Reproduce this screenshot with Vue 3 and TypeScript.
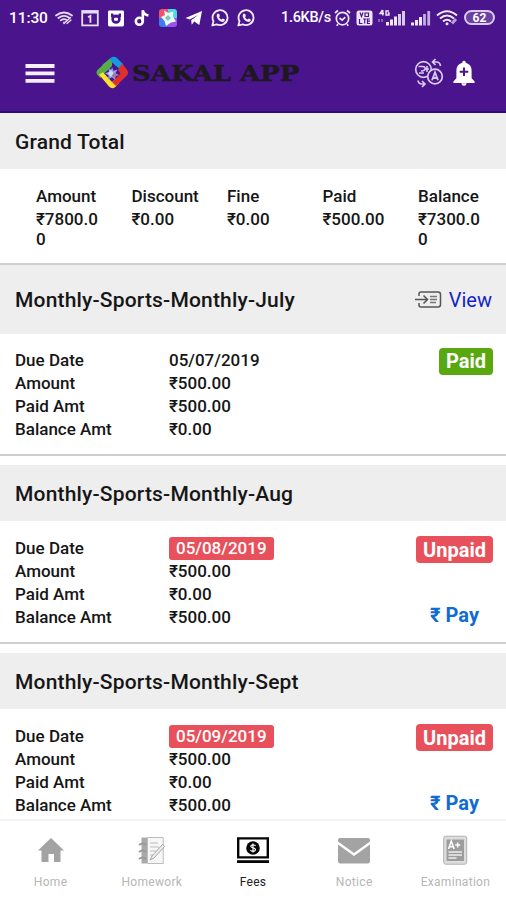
<script setup lang="ts">
interface Total {
  label: string
  value: string
}

interface FeeEntry {
  title: string
  dueDate: string
  amount: string
  paid: string
  balance: string
  settled: boolean
}

const totals: Total[] = [
  { label: 'Amount', value: '₹7800.00' },
  { label: 'Discount', value: '₹0.00' },
  { label: 'Fine', value: '₹0.00' },
  { label: 'Paid', value: '₹500.00' },
  { label: 'Balance', value: '₹7300.00' },
]

const fees: FeeEntry[] = [
  { title: 'Monthly-Sports-Monthly-July', dueDate: '05/07/2019', amount: '₹500.00', paid: '₹500.00', balance: '₹0.00', settled: true },
  { title: 'Monthly-Sports-Monthly-Aug', dueDate: '05/08/2019', amount: '₹500.00', paid: '₹0.00', balance: '₹500.00', settled: false },
  { title: 'Monthly-Sports-Monthly-Sept', dueDate: '05/09/2019', amount: '₹500.00', paid: '₹0.00', balance: '₹500.00', settled: false },
]
</script>

<template>
  <div class="screen">
    <header class="top">
      <div class="status">
        <span class="clock">11:30</span>
        <div class="status-left">
          <svg width="18" height="18" viewBox="0 0 18 18" fill="none" stroke="#e6dcf5" stroke-width="1.8" stroke-linecap="round">
            <path d="M1 6.5Q9 0.5 17 6.5M3.4 9Q9 4.8 14.6 9M5.8 11.4Q9 9 12 11.4" />
            <path d="M12 14.5l4-3.5M9 14.5l6.5-6" stroke-width="1.3" />
            <circle cx="9" cy="13.5" r="1" fill="#e6dcf5" stroke="none" />
          </svg>
          <svg width="18" height="18" viewBox="0 0 18 18">
            <rect x="1.2" y="2" width="15.6" height="14.4" fill="none" stroke="#e6dcf5" stroke-width="1.8" />
            <path d="M1 3.2h16" stroke="#e6dcf5" stroke-width="2.6" />
            <path d="M7 8.2l2.4-1.4v7" fill="none" stroke="#e6dcf5" stroke-width="1.8" />
          </svg>
          <svg width="18" height="18" viewBox="0 0 18 18">
            <rect x="1" y="1.4" width="16" height="16" rx="1.4" fill="#fff" />
            <path d="M4 4.4h2l1 2h4l1-2h2v4H4z" fill="#4a148c" />
            <circle cx="9" cy="10.2" r="4.6" fill="#4a148c" />
            <rect x="7" y="8.700" width="4" height="3" rx="1" fill="#fff" />
          </svg>
          <svg width="18" height="18" viewBox="0 0 18 18" fill="none" stroke="#fff" stroke-width="2.6">
            <circle cx="6.3" cy="12.3" r="3.5" />
            <path d="M9.8 12.3V1.2q.8 4.6 5.6 5.2" />
          </svg>
          <svg width="18" height="18" viewBox="0 0 18 18">
            <path d="M3 0h6v9H0V3Q0 0 3 0z" fill="#ef5367" />
            <path d="M9 0h6q3 0 3 3v6H9z" fill="#49dbe0" />
            <path d="M0 9h9v9H3q-3 0-3-3z" fill="#3c7df0" />
            <path d="M9 9h9v6q0 3-3 3H9z" fill="#9854e8" />
            <path d="M5 1.500L9.500 4l5-1.500-.5 5 3 5-5 1-5 3.500-1.500-5L2 8l4-2z" fill="#e8fbf5" />
            <path d="M9 6L12 9 9 12 6 9z" fill="#79c9bd" />
          </svg>
          <svg width="18" height="18" viewBox="0 0 18 18" fill="#fff">
            <path d="M0.5 9L17 2l-2.7 14-5-3.5-2.6 3.2-.5-4.4 7.3-5.6-8.8 4.8z" />
          </svg>
          <svg v-for="n in 2" :key="n" class="wa" width="19" height="18" viewBox="0 0 19 18">
            <path d="M1.3 16.5l1.2-4.2A7.5 7.5 0 1 1 5.6 15.3z" fill="none" stroke="#f1ebfa" stroke-width="1.8" stroke-linejoin="round" />
            <path d="M6.6 4.6l1.7.4.6 2.2-.9 1q1 1.8 2.7 2.4l1-1 2.2 1q0 2.2-2.2 2.3Q7.400 12.400 5.700 7.700 5.400 5.600 6.600 4.600z" fill="#f1ebfa" />
          </svg>
        </div>
        <span class="speed">1.6KB/s</span>
        <div class="status-right">
          <svg width="17" height="18" viewBox="0 0 17 18" fill="none" stroke="#efe8fa" stroke-width="1.7">
            <circle cx="8.500" cy="9.600" r="6.200" />
            <path d="M1 4l3-2.500M16 4l-3-2.500M5.500 9l2.600 2.200 3.200-3M4 15.200l-1.300 1.600M13 15.200l1.300 1.600" />
          </svg>
          <svg width="17" height="18" viewBox="0 0 17 18">
            <rect x="0.500" y="1.500" width="16" height="15" rx="2.500" fill="#efe8fa" />
            <path d="M4 3.500l1.500 4 1.500-4M9 4h3.500v3.500H9zM3.500 10v4.500h3M7 10h3.500M8.700 10v4.500M14 10h-2.500v4.500H14M11.500 12.200H14" fill="none" stroke="#4a148c" stroke-width="1.200" />
          </svg>
          <svg width="28" height="18" viewBox="0 0 28 18">
            <path d="M4.500 1L2 4.500h4M4.800 1v5.500M11 2H8v4h3V4H9.700" fill="none" stroke="#efe8fa" stroke-width="1.400" />
            <path d="M1 10v3M4 10v3" stroke="#9a78c6" stroke-width="1.500" />
            <path d="M9.500 13v3.500M13.500 10.500v6M17.500 7.500v9" stroke="#efe8fa" stroke-width="3" />
            <path d="M21.500 5v11.500M25.500 2v14.500" stroke="#d9c9ee" stroke-width="3" />
          </svg>
          <svg width="20" height="18" viewBox="0 0 20 18">
            <path d="M1.500 13.500v3M5.500 11v5.500M9.500 8v8.500" stroke="#efe8fa" stroke-width="3" />
            <path d="M13.500 5v11.500M17.700 2v14.500" stroke="#c5aee2" stroke-width="2.800" />
          </svg>
          <svg width="22" height="18" viewBox="0 0 22 18" fill="none" stroke="#efe8fa" stroke-width="2">
            <path d="M1 6.500Q11-2 21 6.500M4 9.500Q11 3.500 18 9.500M7 12.500Q11 9 15 12.500" />
            <circle cx="11" cy="14.800" r="1.500" fill="#efe8fa" stroke="none" />
            <path d="M16 14.500l4-4.500" stroke="#b89edb" stroke-width="3" />
          </svg>
          <div class="battery"><span>62</span></div>
        </div>
      </div>

      <div class="appbar">
        <svg class="menu" width="30" height="20" viewBox="0 0 30 20" stroke="#f4effb" stroke-width="3.800">
          <path d="M0.500 3h29M0.500 10.400h29M0.500 17.800h29" />
        </svg>
        <svg class="logo" width="34" height="34" viewBox="0 0 34 34">
          <path d="M17 1q3-.8 5 1l6.500 6.500-4.200 4.300L17 6.500 12.500 11 7 9z" fill="#169be0" />
          <path d="M15 2.500L3.500 13Q0 16 2.500 19l3 3 3.700-4.500L17 10V7z" fill="#58ad43" />
          <path d="M4 18.500l10 12q3 3 6 .7l4-4-4-3.700-3 2.500-9-9.800z" fill="#fae12e" />
          <path d="M27 7.500l4.500 5.500q2.800 3.700.5 6.500L21 30l-4-4 8.500-8.500L23 14z" fill="#df302b" />
          <path d="M17 11l1.500 3.700 4-1.200-2 3.700 3.500 1.700-3.900 1.300.3 3.800-3.500-2.800-3.900 2.200.6-4-3.600-2.100 4-1.500-.6-3.800 2.800 1.800z" fill="#8d9fe0" />
          <path d="M16 14l2.500 3-2.500 4-3-3.500z" fill="#c6dff0" />
          <path d="M19 17l3 2-2 3-3-2z" fill="#b16b9c" />
        </svg>
        <h1 class="brand">SAKAL APP</h1>
        <svg class="translate" width="30" height="30" viewBox="0 0 30 30" fill="none" stroke="#d9cbee" stroke-width="1.700">
          <circle cx="9.500" cy="11.500" r="7.800" />
          <circle cx="21" cy="18.500" r="7.300" fill="#4a148c" />
          <path d="M18 22.300l3-8 3 8M19 20h4" stroke-width="1.800" />
          <path d="M4.500 8.500h4q3.500 0 2.500 3-1.500 2-4 1.300M5 15h5M13 8v6M10.500 11h4.500" stroke-width="1.600" />
          <path d="M18.500 4h4q3.500 0 4 4M21.500 1l-3 3 3 3M11 26H8q-3.500 0-4-3.500M8 23l3 3-3 3" />
        </svg>
        <svg class="bell" width="22" height="26" viewBox="0 0 22 26" fill="#fff">
          <path d="M11 .8q1.800 0 1.800 2 5.800 1.700 5.800 8v7.500l3 3.200v1.500H.4v-1.500l3-3.200v-7.500q0-6.300 5.800-8 0-2 1.800-2zM8.300 23.300h5.400q-.4 2.500-2.700 2.500t-2.700-2.500z" />
          <path d="M11 7.500v8.600M6.700 11.800h8.600" stroke="#4a148c" stroke-width="2" />
        </svg>
      </div>
    </header>

    <main class="content">
      <section class="card summary">
        <div class="card-head"><h2>Grand Total</h2></div>
        <div class="totals">
          <div v-for="t in totals" :key="t.label" class="total">
            <div class="total-label">{{ t.label }}</div>
            <div class="total-value">{{ t.value }}</div>
          </div>
        </div>
      </section>

      <section v-for="fee in fees" :key="fee.title" class="card" :class="{ settled: fee.settled }">
        <div class="card-head">
          <h2>{{ fee.title }}</h2>
          <a v-if="fee.settled" class="view">
            <svg width="28" height="18" viewBox="0 0 28 18" fill="none" stroke="#555" stroke-width="1.500">
              <path d="M5 5V3q0-2 2-2h17q2.500 0 2.500 2.500v10Q26.500 16 24 16H7q-2 0-2-2v-2" />
              <path d="M1 8.500h12M9.500 4.500l4 4-4 4" />
              <path d="M16 5.500h7M16 8.500h7M16 11.500h6" stroke="#777" />
            </svg>
            <span>View</span>
          </a>
        </div>
        <div class="card-body">
          <dl class="rows">
            <dt>Due Date</dt>
            <dd><span :class="{ overdue: !fee.settled }">{{ fee.dueDate }}</span></dd>
            <dt>Amount</dt>
            <dd>{{ fee.amount }}</dd>
            <dt>Paid Amt</dt>
            <dd>{{ fee.paid }}</dd>
            <dt>Balance Amt</dt>
            <dd>{{ fee.balance }}</dd>
          </dl>
          <div class="side">
            <span class="badge" :class="fee.settled ? 'paid' : 'unpaid'">{{ fee.settled ? 'Paid' : 'Unpaid' }}</span>
            <a v-if="!fee.settled" class="pay">₹ Pay</a>
          </div>
        </div>
      </section>
    </main>

    <nav class="tabs">
      <div class="tab">
        <svg width="28" height="30" viewBox="0 0 28 30" fill="#a3a3a3">
          <path d="M14 3L27 15.500h-3.500V27H17v-8h-5.500v8h-7V15.500H1z" />
        </svg>
        <span>Home</span>
      </div>
      <div class="tab">
        <svg width="28" height="30" viewBox="0 0 28 30" fill="none">
          <path d="M3.500 2.500H9v26H3.500z" fill="#aaa" />
          <path d="M9.500 2.500h15.700v26H9.500z" fill="#f7f7f7" stroke="#bcbcbc" />
          <path d="M12 8h8M12 12h9M12 16h6M12 20h5" stroke="#bbb" stroke-width="1.200" />
          <path d="M1 10q4-3 7 0M1 17q4-3 7 0M1 24q4-3 7 0" stroke="#999" stroke-width="2" />
          <path d="M12 25l2-4 10.500-11.500 2 2L16 23z" fill="#eee" stroke="#a5a5a5" />
        </svg>
        <span>Homework</span>
      </div>
      <div class="tab active">
        <svg width="34" height="30" viewBox="0 0 34 30">
          <path d="M2.200 3.400h29.600v19H2.200z" fill="#fff" stroke="#050505" stroke-width="2.400" />
          <path d="M1 26.600h32" stroke="#050505" stroke-width="2.800" />
          <circle cx="17" cy="13" r="6.800" fill="#050505" />
          <path d="M19.500 11q-1-1.500-3-1.200-2 .5-1.500 2 .5.800 2 1 2.500.4 2.500 2-.4 1.600-2.500 1.500-1.700 0-2.700-1.300M17 8.500v9" fill="none" stroke="#fff" stroke-width="1.200" />
        </svg>
        <span>Fees</span>
      </div>
      <div class="tab">
        <svg width="34" height="30" viewBox="0 0 34 30" fill="#a3a3a3">
          <path d="M3 3h28q2 0 2 2v1.500L17 18 1 6.500V5q0-2 2-2zM1 9.500l16 11.500L33 9.500V26q0 2.500-2.500 2.500h-27Q1 28.500 1 26z" />
        </svg>
        <span>Notice</span>
      </div>
      <div class="tab">
        <svg width="28" height="30" viewBox="0 0 28 30">
          <rect x="2.700" y="1.200" width="23" height="28" rx="2" fill="#ddd" stroke="#b1b1b1" />
          <rect x="5.500" y="4.500" width="17.500" height="21.500" fill="#9d9d9d" />
          <path d="M7.500 14l2.800-8 2.800 8M8.500 11.700h3.700M16.700 7.500v5M14.200 10h5" fill="none" stroke="#fff" stroke-width="1.500" />
          <path d="M7.500 17h13.500M7.500 20h13.500M7.500 23h8" stroke="#eee" stroke-width="1.300" />
        </svg>
        <span>Examination</span>
      </div>
    </nav>
  </div>
</template>

<style>
body {
  margin: 0;
  overflow: hidden;
}
</style>

<style scoped>
.screen {
  width: 506px;
  height: 900px;
  display: flex;
  flex-direction: column;
  overflow: hidden;
  background: #fff;
  color: #161616;
  font-family: Roboto, "Liberation Sans", sans-serif;
}

h1,
h2,
dl,
dd {
  margin: 0;
}

svg {
  display: block;
  flex: none;
}

.top {
  box-sizing: border-box;
  flex: none;
  height: 113px;
  background: #4a148c;
  border-bottom: 2px solid #2d0c72;
  color: #fff;
}

.status {
  display: flex;
  align-items: center;
  height: 35px;
  padding-left: 9px;
}

.clock {
  width: 46px;
  font-size: 15.500px;
  font-weight: 500;
  letter-spacing: -0.1px;
}

.status-left {
  display: flex;
  gap: 8px;
  width: 217px;
}

.wa {
  margin-right: -1px;
}

.speed {
  width: 53px;
  margin-left: 9px;
  font-size: 14.500px;
  font-weight: 500;
  letter-spacing: -0.300px;
  white-space: nowrap;
}

.status-right {
  display: flex;
  align-items: center;
  gap: 5px;
}

.battery {
  display: flex;
  align-items: center;
  justify-content: center;
  box-sizing: border-box;
  width: 31px;
  height: 15px;
  margin-left: 1px;
  border: 2px solid #d9cbee;
  border-radius: 8px;
  background: #6c3fa4;
  font-size: 12px;
  font-weight: 700;
}

.appbar {
  display: flex;
  align-items: center;
  height: 76px;
  padding: 0 31px 0 25px;
}

.logo {
  margin-left: 40px;
}

.brand {
  margin-left: 3px;
  color: #1d1820;
  font-family: "DejaVu Serif", serif;
  font-size: 23px;
  font-weight: 700;
  line-height: 30px;
  white-space: nowrap;
  transform: scaleX(1.13);
  transform-origin: left center;
  -webkit-text-stroke: 0.5px #1d1820;
}

.translate {
  margin-left: auto;
}

.bell {
  margin-left: 9px;
}

.content {
  flex: 1;
  min-height: 0;
  overflow: hidden;
}

.card {
  margin-bottom: 9px;
  border-bottom: 2px solid #cfcfcf;
}

.card.summary {
  margin-bottom: 0;
}

.card-head {
  display: flex;
  align-items: center;
  justify-content: space-between;
  box-sizing: border-box;
  height: 56px;
  padding: 2px 14px 0 15px;
  background: #eee;
}

.settled .card-head {
  height: 69px;
  padding-top: 0;
}

h2 {
  font-size: 21px;
  font-weight: 500;
  line-height: 26px;
  letter-spacing: 0.180px;
  white-space: nowrap;
}

.view {
  display: flex;
  align-items: center;
  gap: 7px;
  color: #1424c8;
  font-size: 20px;
}

.totals {
  display: flex;
  box-sizing: border-box;
  height: 94px;
  padding: 15px 0 0 36px;
}

.total {
  box-sizing: border-box;
  flex: none;
  width: 95.500px;
  padding-right: 28px;
  font-size: 17px;
  font-weight: 500;
}

.total-label {
  line-height: 25px;
  white-space: nowrap;
}

.total-value {
  line-height: 20px;
  word-break: break-all;
}

.card-body {
  display: flex;
  justify-content: space-between;
  box-sizing: border-box;
  height: 121px;
  padding: 15px 13px 14px 15px;
}

.settled .card-body {
  height: 120px;
}

.rows {
  display: grid;
  grid-template-columns: 154px auto;
  grid-auto-rows: 23px;
  padding-top: 1px;
  font-size: 17px;
  font-weight: 500;
  line-height: 23px;
}

.settled .rows {
  padding-top: 0;
}

.overdue {
  display: inline-block;
  height: 23px;
  padding: 0 7px;
  border-radius: 3px;
  background: #e8505b;
  color: #fff;
}

.side {
  display: flex;
  flex-direction: column;
  justify-content: space-between;
  align-items: flex-end;
}

.badge {
  box-sizing: border-box;
  height: 27px;
  padding: 1px 7px 0;
  border-radius: 4px;
  color: #fff;
  font-size: 20px;
  font-weight: 700;
  line-height: 27px;
}

.settled .badge {
  padding-top: 0;
  margin-top: -1px;
}

.paid {
  background: #59a80f;
}

.unpaid {
  background: #e8505b;
}

.pay {
  padding-right: 14px;
  color: #126bd2;
  font-size: 20px;
  font-weight: 700;
  line-height: 26px;
}

.tabs {
  display: flex;
  box-sizing: border-box;
  flex: none;
  height: 81px;
  padding-top: 14px;
  border-top: 2px solid #f4f4f4;
  background: #fff;
}

.tab {
  display: flex;
  flex: 1;
  flex-direction: column;
  align-items: center;
  gap: 9px;
  color: #b6b6b6;
  font-size: 12px;
  line-height: 16px;
  letter-spacing: 0.300px;
}

.tab.active {
  color: #222;
}
</style>
